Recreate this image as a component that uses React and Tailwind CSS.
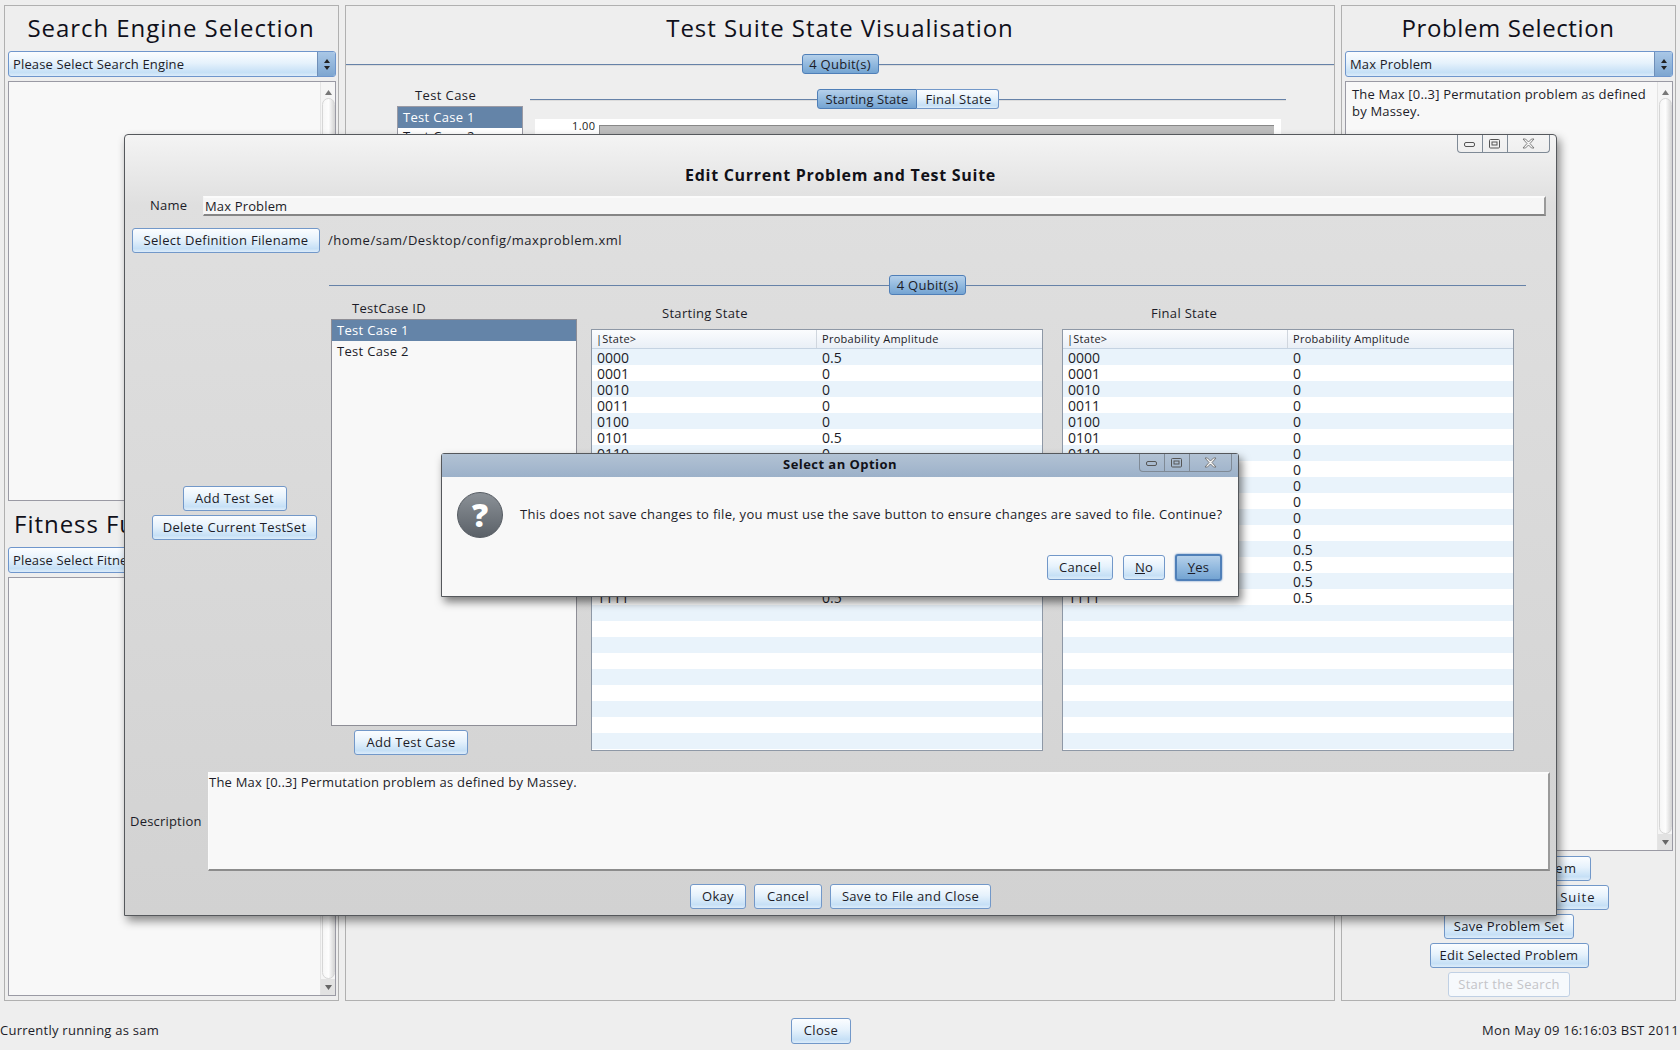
import React from "react";

const Btn = ({ children, className = "" }) => (
  <div className={"flex items-center justify-center rounded-[3px] border border-[#7298c9] bg-[linear-gradient(#fbfdff,#e6f2fc_45%,#c6e0f6_85%,#dcecfa)] text-[13px] leading-none tracking-[0.3px] text-[#1c1c28] shrink-0 " + className}>{children}</div>
);

const Lit = ({ children, className = "" }) => (
  <div className={"flex items-center justify-center rounded-[3px] border border-[#4f7fb8] bg-[linear-gradient(#b5d0ea,#93badf_50%,#74a4d2)] text-[13px] leading-none tracking-[0.3px] text-[#1c1c28] shrink-0 " + className}>{children}</div>
);

const Line = () => <div className="h-px flex-1 bg-[#6682a8] shadow-[0_1px_0_#dcdcdc]" />;

const Combo = ({ children }) => (
  <div className="flex h-[26px] w-[328px] items-stretch overflow-hidden rounded-[3px] border border-[#6f96cc] bg-[linear-gradient(#fbfdff,#e6f2fc_45%,#c6e0f6_85%,#dcecfa)]">
    <div className="flex flex-1 items-center pl-[4px] pt-[1px] text-[13px] tracking-[0.15px] text-[#1c1c28]">{children}</div>
    <div className="flex w-[18px] flex-col items-center justify-center gap-[2px] border-l border-[#6f8fb8] bg-[linear-gradient(#a9c7e6,#7ea6d0)]">
      <svg width="6" height="11" viewBox="0 0 6 11"><path d="M3 0 L6 4 L0 4 Z M3 11 L6 7 L0 7 Z" fill="#222" /></svg>
    </div>
  </div>
);

const Scrollbar = () => (
  <div className="flex h-full w-[15px] shrink-0 flex-col items-center border-l border-[#e4e4e4] bg-[#f5f5f5]">
    <div className="flex h-[16px] w-full items-center justify-center pt-[4px]">
      <svg width="7" height="5" viewBox="0 0 7 5"><path d="M3.5 0 L7 5 L0 5 Z" fill="#777" /></svg>
    </div>
    <div className="w-[13px] flex-1 rounded-[7px] border border-[#d6d6d6] bg-[linear-gradient(90deg,#f6f6f6,#fdfdfd_50%,#d8d8d8)]" />
    <div className="flex h-[16px] w-full items-center justify-center bg-[#e2e2e2]">
      <svg width="7" height="5" viewBox="0 0 7 5"><path d="M3.5 5 L7 0 L0 0 Z" fill="#666" /></svg>
    </div>
  </div>
);

const WinButtons = () => (
  <div className="absolute right-[6px] top-0 flex h-[18px] w-[93px] rounded-b-[4px] border border-t-0 border-[#7f8a96]">
    <div className="flex w-[25px] items-center justify-center border-r border-[#7f8a96] pt-[3px]">
      <svg width="12" height="6" viewBox="0 0 12 6"><rect x="0.5" y="0.5" width="10" height="4" rx="1.5" fill="none" stroke="#555" /></svg>
    </div>
    <div className="flex w-[25px] items-center justify-center border-r border-[#7f8a96]">
      <svg width="12" height="10" viewBox="0 0 12 10"><rect x="0.5" y="0.5" width="10" height="8.5" rx="1" fill="none" stroke="#555" /><rect x="3" y="3" width="5" height="3" fill="none" stroke="#555" /></svg>
    </div>
    <div className="flex flex-1 items-center justify-center">
      <svg width="13" height="11" viewBox="0 0 13 11"><path d="M1 1 L3.5 1 L6.5 4 L9.5 1 L12 1 L8 5.5 L12 10 L9.5 10 L6.5 7 L3.5 10 L1 10 L5 5.5 Z" fill="#f4f4f4" stroke="#666" strokeWidth="0.8" /></svg>
    </div>
  </div>
);

const Bits = Array.from({ length: 16 }, (_, i) => i.toString(2).padStart(4, "0"));

const StateTable = ({ values }) => (
  <div className="h-[422px] w-[452px] border border-[#8e98a6] bg-white">
    <div className="flex h-[19px] border-b border-[#c5d3e2] bg-[linear-gradient(#fbfcfe,#e9eff6)] text-[11px] tracking-[0.27px] text-[#1c1c28]">
      <div className="flex w-[225px] items-center border-r border-[#d0d6de] pl-[4px]">|State&gt;</div>
      <div className="flex flex-1 items-center pl-[5px]">Probability Amplitude</div>
    </div>
    {Array.from({ length: 25 }, (_, i) => (
      <div key={i} className={"flex h-[16px] items-center pt-[2px] text-[14px] leading-none text-[#1c1c28] " + (i % 2 === 0 ? "bg-[#e9f3fb]" : "bg-white")}>
        <div className="w-[225px] pl-[5px]">{Bits[i] || ""}</div>
        <div className="pl-[5px]">{i < 16 ? values[i] : ""}</div>
      </div>
    ))}
  </div>
);

const start = Bits.map((_, i) => (i % 5 === 0 ? "0.5" : "0"));
const final = Bits.map((_, i) => (i >= 12 ? "0.5" : "0"));

const Side = ({ children, className = "" }) => (
  <div className={"h-[996px] w-[335px] shrink-0 border border-[#b0b0b0] pl-[3px] " + className}>{children}</div>
);
const Title = ({ children, h }) => (
  <div className={"flex items-center justify-center pr-[4px] text-[24px] leading-none text-[#10101a] " + h}>{children}</div>
);

export default function App() {
  return (
    <div className="relative flex h-[1050px] w-[1680px] flex-col overflow-hidden bg-[#eeeeee] font-['Open_Sans','DejaVu_Sans',sans-serif]">
      <div className="flex h-[1001px] items-start pl-[4px] pt-[5px]">
        <Side>
          <Title h="h-[45px] pb-[2px] tracking-[0.95px]">Search Engine Selection</Title>
          <Combo>Please Select Search Engine</Combo>
          <div className="mt-[4px] flex h-[420px] w-[328px] justify-end border border-[#9a9aa4] bg-[#f8f8f8]"><Scrollbar /></div>
          <Title h="h-[46px] tracking-[0.95px]">Fitness Function Selection</Title>
          <Combo>Please Select Fitness Function</Combo>
          <div className="mt-[4px] flex h-[419px] w-[328px] justify-end border border-[#9a9aa4] bg-[#f8f8f8]"><Scrollbar /></div>
        </Side>

        <div className="ml-[6px] h-[996px] w-[990px] shrink-0 overflow-hidden border border-[#b0b0b0]">
          <div className="flex h-[48px] items-center justify-center pb-[4px] text-[24px] leading-none tracking-[0.95px] text-[#10101a]">Test Suite State Visualisation</div>
          <div className="flex h-[20px] items-center">
            <Line />
            <Lit className="h-[20px] w-[77px]">4 Qubit(s)</Lit>
            <Line />
          </div>
          <div className="mt-[15px] flex pl-[51px]">
            <div className="w-[126px]">
              <div className="flex h-[17px] items-start justify-center pr-[29px] text-[13px] leading-[13px] tracking-[0.4px] text-[#1c1c28]">Test Case</div>
              <div className="h-[100px] border border-[#9a9aa4] bg-white text-[13px] tracking-[0.3px] text-[#1c1c28]">
                <div className="flex h-[21px] items-center bg-[#6484a8] pl-[5px] text-white">Test Case 1</div>
                <div className="flex h-[18px] items-center pl-[5px]">Test Case 2</div>
              </div>
            </div>
            <div className="ml-[7px] w-[756px]">
              <div className="flex h-[20px] items-center">
                <Line />
                <Lit className="h-[20px] w-[100px] rounded-r-none"><span className="tracking-[0.1px]">Starting State</span></Lit>
                <Btn className="h-[20px] w-[82px] rounded-l-none border-l-0 pl-[2px]">Final State</Btn>
                <Line />
              </div>
              <div className="ml-[5px] mt-[10px] flex h-[100px] w-[746px] bg-white pl-[37px] pr-[7px] pt-[1px]">
                <div className="w-[27px] text-[11px] leading-[11px] tracking-[0.4px] text-[#222]">1.00</div>
                <div className="mt-[5px] h-[90px] flex-1 border-l border-t border-[#888] bg-[#bdbdbd]" />
              </div>
            </div>
          </div>
        </div>

        <Side className="ml-[6px]">
          <Title h="h-[45px] pb-[2px] tracking-[0.6px]">Problem Selection</Title>
          <Combo>Max Problem</Combo>
          <div className="mt-[4px] flex h-[770px] w-[328px] border border-[#9a9aa4] bg-[#f8f8f8]">
            <div className="flex-1 pl-[6px] pt-[4px] text-[13px] leading-[17px] tracking-[0.18px] text-[#1c1c28]">The Max [0..3] Permutation problem as defined by Massey.</div>
            <Scrollbar />
          </div>
          <div className="mt-[5px] flex flex-col items-center gap-[4px] pr-[2px]">
            <Btn className="h-[25px] w-[163px]"><span className="ml-auto mr-[12px] whitespace-nowrap tracking-[1.5px]">Add New Problem</span></Btn>
            <Btn className="h-[25px] w-[199px]"><span className="ml-auto mr-[12px] whitespace-nowrap tracking-[1px]">Create Test Suite</span></Btn>
            <Btn className="h-[25px] w-[130px]">Save Problem Set</Btn>
            <Btn className="h-[25px] w-[159px]">Edit Selected Problem</Btn>
            <Btn className="h-[25px] w-[122px] border-[#c0d0e4] bg-none bg-[#f6f9fc] text-[#c4c4c8]">Start the Search</Btn>
          </div>
        </Side>
      </div>

      <div className="flex h-[49px] items-center pt-[10px] text-[13px] tracking-[0.25px] text-[#1c1c28]">
        <div className="w-[791px]">Currently running as sam</div>
        <Btn className="h-[26px] w-[60px]">Close</Btn>
        <div className="flex-1 pr-[1px] text-right"><span className="tracking-[0.3px]">Mon May 09 16:16:03 BST 2011</span></div>
      </div>

      {/* Edit dialog window */}
      <div className="absolute left-[124px] top-[134px] z-10 h-[782px] w-[1433px] rounded-t-[4px] border border-[#55585c] bg-[linear-gradient(#f4f4f4,#dfdfdf_9%,#d2d2d2)] shadow-[3px_5px_10px_rgba(0,0,0,0.45)]">
        <WinButtons />
        <div className="flex h-[61px] items-center justify-center pt-[19px] text-[16px] font-bold leading-none tracking-[0.72px] text-[#111118]">Edit Current Problem and Test Suite</div>
        <div className="flex h-[20px] items-center pl-[25px]">
          <div className="w-[53px] text-[13px] tracking-[0.2px] text-[#1c1c28]">Name</div>
          <div className="flex h-[20px] w-[1343px] items-center border-b-2 border-r-2 border-l border-t-2 border-b-[#858585] border-l-[#f4f4f4] border-r-[#9a9a9a] border-t-[#fbfbfb] bg-[#f6f6f6] pl-[1px] pt-[1px] text-[13px] tracking-[0.15px] text-[#1c1c28]">Max Problem</div>
        </div>
        <div className="mt-[12px] flex items-center pl-[7px]">
          <Btn className="h-[25px] w-[188px]">Select Definition Filename</Btn>
          <div className="ml-[8px] text-[13px] tracking-[0.5px] text-[#1c1c28]">/home/sam/Desktop/config/maxproblem.xml</div>
        </div>

        <div className="mt-[22px] flex">
          <div className="w-[204px] pt-[211px]">
            <div className="ml-[27px] flex w-[165px] flex-col items-center gap-[4px]">
              <Btn className="h-[25px] w-[104px]">Add Test Set</Btn>
              <Btn className="h-[25px] w-[165px]">Delete Current TestSet</Btn>
            </div>
          </div>
          <div className="w-[1197px]">
            <div className="flex h-[20px] items-center">
              <Line />
              <Lit className="h-[20px] w-[77px]">4 Qubit(s)</Lit>
              <Line />
            </div>
            <div className="flex">
              <div className="ml-[2px] w-[246px]">
                <div className="flex h-[24px] items-center pl-[21px] pt-[4px] text-[13px] tracking-[0.3px] text-[#1c1c28]">TestCase ID</div>
                <div className="h-[407px] border border-[#8e8e96] bg-[#f8f8f8] text-[13px] tracking-[0.3px] text-[#1c1c28]">
                  <div className="flex h-[21px] items-center bg-[#6484a8] pl-[5px] text-white">Test Case 1</div>
                  <div className="flex h-[21px] items-center pl-[5px]">Test Case 2</div>
                </div>
                <Btn className="ml-[23px] mt-[4px] h-[25px] w-[114px]">Add Test Case</Btn>
              </div>
              <div className="ml-[14px] w-[452px]">
                <div className="flex h-[34px] items-center pl-[71px] pt-[4px] text-[13px] tracking-[0.3px] text-[#1c1c28]">Starting State</div>
                <StateTable values={start} />
              </div>
              <div className="ml-[19px] w-[452px]">
                <div className="flex h-[34px] items-center pl-[89px] pt-[4px] text-[13px] tracking-[0.3px] text-[#1c1c28]">Final State</div>
                <StateTable values={final} />
              </div>
            </div>
          </div>
        </div>

        <div className="mt-[17px] flex items-center pl-[5px]">
          <div className="w-[78px] text-[13px] tracking-[0.2px] text-[#1c1c28]">Description</div>
          <div className="h-[99px] w-[1342px] border-[2px] border-l border-b-[#8c8c8c] border-l-[#fbfbfb] border-r-[#9a9a9a] border-t-[#fbfbfb] bg-[#f8f8f8] text-[13px] leading-[17px] tracking-[0.22px] text-[#1c1c28]">The Max [0..3] Permutation problem as defined by Massey.</div>
        </div>

        <div className="mt-[13px] flex justify-center gap-[8px]">
          <Btn className="h-[25px] w-[56px]">Okay</Btn>
          <Btn className="h-[25px] w-[68px]">Cancel</Btn>
          <Btn className="h-[25px] w-[161px]">Save to File and Close</Btn>
        </div>
      </div>

      {/* Confirm dialog window */}
      <div className="absolute left-[441px] top-[453px] z-20 h-[144px] w-[798px] rounded-t-[3px] border border-[#55585c] bg-[#f8f8f8] shadow-[3px_5px_9px_rgba(0,0,0,0.5)]">
        <WinButtons />
        <div className="flex h-[23px] items-center justify-center bg-[linear-gradient(#b2c2d4,#9cb1c9)] pb-[2px] text-[13px] font-bold leading-none tracking-[0.45px] text-[#111118]">Select an Option</div>
        <div className="flex pl-[15px] pt-[15px]">
          <div className="flex h-[46px] w-[46px] items-center justify-center rounded-full border border-[#555b62] bg-[linear-gradient(#8b9197,#5b6168)] text-[32px] font-extrabold leading-none text-white">?</div>
          <div className="ml-[17px] flex h-[46px] items-center whitespace-nowrap text-[13px] tracking-[0.29px] text-[#1c1c28]">This does not save changes to file, you must use the save button to ensure changes are saved to file. Continue?</div>
        </div>
        <div className="mt-[16px] flex items-center justify-end gap-[10px] pr-[16px]">
          <Btn className="h-[25px] w-[66px]">Cancel</Btn>
          <Btn className="h-[25px] w-[42px]"><span><span className="underline">N</span>o</span></Btn>
          <Lit className="h-[27px] w-[47px] border-2 border-[#4a7ab8] shadow-[0_0_2px_#4a7ab8]"><span><span className="underline">Y</span>es</span></Lit>
        </div>
      </div>
    </div>
  );
}
